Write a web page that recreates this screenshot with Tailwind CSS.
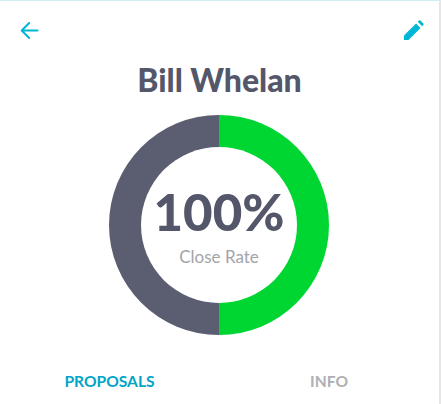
<!DOCTYPE html>
<html lang="en">
<head>
  <meta charset="UTF-8">
  <title>Bill Whelan</title>
  <script src="https://cdn.jsdelivr.net/npm/@tailwindcss/browser@4"></script>
</head>
<body class="bg-white">
  <div class="w-[441px] h-[404px] overflow-hidden flex flex-col bg-white border-t border-t-[#cfeef3] border-r-2 border-r-[#e6e6e6] font-['Lato','Liberation_Sans',sans-serif]">
    <!-- top bar -->
    <div class="flex items-center justify-between pl-[20px] pr-[15px] pt-[18px] h-[41px]">
      <svg class="w-[19px] h-[19px]" viewBox="0 0 19 19" fill="none" stroke="#00b7d8" stroke-width="2" stroke-linecap="round" stroke-linejoin="round">
        <path d="M17.5 9.5H2M9.2 2 1.7 9.5 9.2 17"/>
      </svg>
      <svg class="w-[21px] h-[21px]" viewBox="0 0 21 21" fill="#00b7d8">
        <path d="M1 15.5 13 3.5l4.5 4.5-12 12H1z"/>
        <path d="M14.7 1.8 16 .6q.7-.6 1.4 0l3 3q.6.7 0 1.4l-1.3 1.2z"/>
      </svg>
    </div>

    <h1 class="mt-[20px] text-center text-[32px] leading-[36px] font-black text-[#54566a]">Bill Whelan</h1>

    <!-- close rate ring -->
    <div class="mt-[17px] ml-[109px] w-[220px] h-[220px] rounded-full bg-[linear-gradient(90deg,#5b5d70_50%,#00d632_50%)] flex items-center justify-center">
      <div class="w-[156px] h-[156px] rounded-full bg-white flex flex-col items-center">
        <div class="mt-[37px] text-[51px] leading-[56px] font-black text-[#54566a]">100%</div>
        <div class="mt-[7px] text-[17px] leading-[20px] text-[#a3a3a8]">Close Rate</div>
      </div>
    </div>

    <!-- tabs -->
    <div class="mt-[36px] flex text-[15.6px] leading-[20px] font-bold">
      <div class="w-[219px] text-center text-[#00a5c8]">PROPOSALS</div>
      <div class="w-[220px] text-center text-[#b0b0b4]">INFO</div>
    </div>
  </div>
</body>
</html>
